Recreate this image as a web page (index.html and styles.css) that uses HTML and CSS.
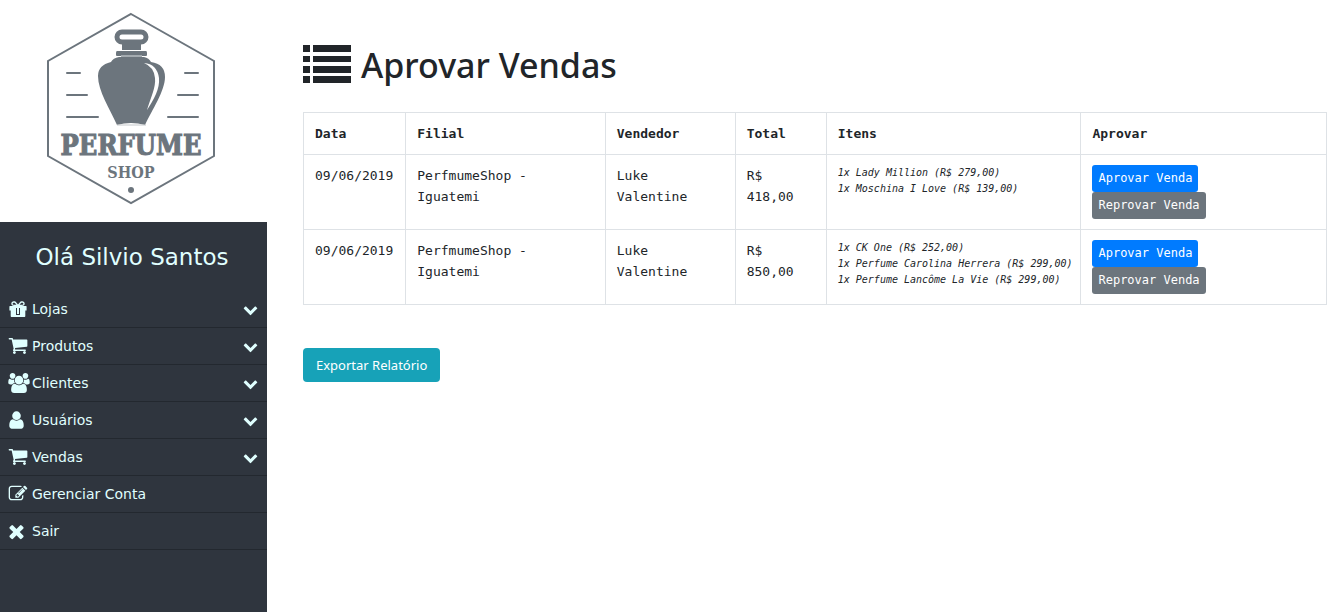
FILE: index.html
```html
<!DOCTYPE html>
<html lang="pt-BR">
<head>
<meta charset="utf-8">
<title>Aprovar Vendas</title>
<link rel="stylesheet" href="styles.css">
</head>
<body>
<svg class="sprite" aria-hidden="true">
  <symbol id="chevron" viewBox="0 0 1792 1792"><path d="M1683 808l-742 741q-19 19-45 19t-45-19l-742-741q-19-19-19-45.500t19-45.500l166-165q19-19 45-19t45 19l531 531 531-531q19-19 45-19t45 19l166 165q19 19 19 45.500t-19 45.500z"/></symbol>
  <symbol id="cart" viewBox="32 160 1728 1600"><path d="M704 1536q0 52-38 90t-90 38-90-38-38-90 38-90 90-38 90 38 38 90zm896 0q0 52-38 90t-90 38-90-38-38-90 38-90 90-38 90 38 38 90zm128-1088v512q0 24-16.500 42.500t-40.500 21.500l-1044 122q13 60 13 70 0 16-24 64h920q26 0 45 19t19 45-19 45-45 19h-1024q-26 0-45-19t-19-45q0-11 8-31.500t16-36 21.500-40 15.500-29.500l-177-823h-204q-26 0-45-19t-19-45 19-45 45-19h256q16 0 28.500 6.500t19.500 15.500 13 24.500 8 26 5.500 29.500 4.500 26h1201q26 0 45 19t19 45z"/></symbol>
  <symbol id="user" viewBox="216 96 1360 1600"><path d="M1536 1399q0 109-62.500 187t-150.500 78h-854q-88 0-150.500-78t-62.500-187q0-85 8.500-160.500t31.500-152 58.500-131 94-89 134.500-34.500q131 128 313 128t313-128q76 0 134.500 34.500t94 89 58.500 131 31.500 152 8.500 160.500zm-256-887q0 159-112.500 271.500t-271.500 112.500-271.500-112.500-112.500-271.500 112.500-271.500 271.500-112.500 271.500 112.500 112.500 271.500z"/></symbol>
  <symbol id="times" viewBox="180 150 1432 1432"><path d="M1490 1322q0 40-28 68l-136 136q-28 28-68 28t-68-28l-294-294-294 294q-28 28-68 28t-68-28l-136-136q-28-28-28-68t28-68l294-294-294-294q-28-28-28-68t28-68l136-136q28-28 68-28t68 28l294 294 294-294q28-28 68-28t68 28l136 136q28 28 28 68t-28 68l-294 294 294 294q28 28 28 68z"/></symbol>
  <symbol id="edit" viewBox="0 64 1792 1728"><path d="M888 1184l116-116-152-152-116 116v56h96v96h56zm440-720q-16-16-33 1l-350 350q-17 17-1 33t33-1l350-350q17-17 1-33zm80 594v190q0 119-84.500 203.500t-203.500 84.500h-832q-119 0-203.500-84.500t-84.500-203.500v-832q0-119 84.500-203.500t203.500-84.500h832q63 0 117 25 15 7 18 23 3 17-9 29l-49 49q-14 14-32 8-23-6-45-6h-832q-66 0-113 47t-47 113v832q0 66 47 113t113 47h832q66 0 113-47t47-113v-126q0-13 9-22l64-64q15-15 35-7t20 29zm-96-738l288 288-672 672h-288v-288zm444 132l-92 92-288-288 92-92q28-28 68-28t68 28l152 152q28 28 28 68t-28 68z"/></symbol>
  <symbol id="users" viewBox="0 0 1920 1792"><path d="M593 896q-162 5-265 128h-134q-82 0-138-40.500t-56-118.500q0-353 124-353 6 0 43.500 21t97.500 42.500 119 21.500q67 0 133-23-5 37-5 66 0 139 81 256zm1071 637q0 120-73 189.500t-194 69.500h-874q-121 0-194-69.500t-73-189.500q0-53 3.500-103.500t14-109 26.500-108.500 43-97.500 62-81 85.500-53.500 111.500-20q10 0 43 21.500t73 48 107 48 135 21.500 135-21.500 107-48 73-48 43-21.500q61 0 111.500 20t85.500 53.500 62 81 43 97.500 26.500 108.500 14 109 3.500 103.500zm-1024-1277q0 106-75 181t-181 75-181-75-75-181 75-181 181-75 181 75 75 181zm704 384q0 159-112.500 271.500t-271.500 112.500-271.500-112.500-112.500-271.500 112.500-271.500 271.500-112.500 271.500 112.500 112.500 271.500zm576 225q0 78-56 118.500t-138 40.500h-134q-103-123-265-128 81-117 81-256 0-29-5-66 66 23 133 23 59 0 119-21.500t97.500-42.500 43.500-21q124 0 124 353zm-128-609q0 106-75 181t-181 75-181-75-75-181 75-181 181-75 181 75 75 181z"/></symbol>
  <symbol id="gift" viewBox="0 0 18 18"><path fill-rule="evenodd" d="M1 6h4.500C3 6 2.300 4.900 2.300 3.700 2.300 2.300 3.300 1.300 4.800 1.300c1.200 0 2 .5 2.700 1.400L9 4.500l1.500-1.800c.7-.9 1.500-1.400 2.700-1.400 1.500 0 2.500 1 2.500 2.400 0 1.200-.7 2.300-3.200 2.300H17c.4 0 .6.200.6.600v3.800h-1.300V16c0 .7-.4 1-1 1H2.700c-.6 0-1-.3-1-1v-5.600H.4V6.600C.4 6.200.6 6 1 6zM4.800 2.700c-.7 0-1.100.4-1.100 1s.4 1 1.100 1h2.600L6.200 3.300c-.4-.5-.8-.6-1.400-.6zm8.400 0c-.6 0-1 .1-1.400.6l-1.200 1.400h2.600c.7 0 1.100-.4 1.100-1s-.4-1-1.100-1zM7 8v7h4V8z"/><path d="M8 6h2v8H8z"/></symbol>
</svg>
<div class="layout">
  <aside class="sidebar">
    <div class="brand">
      <svg class="logo" viewBox="0 0 170 194" role="img" aria-label="Perfume Shop">
        <path class="logo-line" d="M85 2L168 49V144L85 191L2 144V49Z"/>
        <rect class="logo-handle" x="71" y="20" width="29" height="10" rx="5"/>
        <path class="logo-fill" d="M76 32h19v6H76zM71 39h29q1 0 1 2v2q0 1-1 1H71q-1 0-1-1v-2q0-2 1-2z"/>
        <path class="logo-soft" d="M75 43h21v3H75z"/>
        <path class="logo-fill" d="M73 45h25q5 1 7 5 14 2 14 15c0 14-13 33-20 48q-14-4-28 0C64 97 52 79 52 64q0-11 13-14 2-4 8-5z"/>
        <path class="logo-gap" d="M98 51q13 1 15 15c1 11-5 21-12 32 4-13 9-23 8-32q-1-11-11-15z"/>
        <path class="logo-edge" d="M71 113h29"/>
        <path class="logo-dash" d="M21 61h13M21 83h20M21 105h31M139 61h13M132 83h20M122 105h30"/>
        <text class="logo-name" x="85" y="143">PERFUME</text>
        <text class="logo-sub" x="85" y="166">SHOP</text>
        <circle class="logo-fill" cx="85" cy="178" r="3"/>
      </svg>
    </div>
    <p class="greeting">Olá Silvio Santos</p>
    <nav class="menu">
      <button class="item" type="button"><svg class="icon"><use href="#gift"/></svg><span>Lojas</span><svg class="arrow"><use href="#chevron"/></svg></button>
      <button class="item" type="button"><svg class="icon"><use href="#cart"/></svg><span>Produtos</span><svg class="arrow"><use href="#chevron"/></svg></button>
      <button class="item" type="button"><svg class="icon wide"><use href="#users"/></svg><span>Clientes</span><svg class="arrow"><use href="#chevron"/></svg></button>
      <button class="item" type="button"><svg class="icon narrow"><use href="#user"/></svg><span>Usuários</span><svg class="arrow"><use href="#chevron"/></svg></button>
      <button class="item" type="button"><svg class="icon"><use href="#cart"/></svg><span>Vendas</span><svg class="arrow"><use href="#chevron"/></svg></button>
      <a class="item" href="#conta"><svg class="icon"><use href="#edit"/></svg><span>Gerenciar Conta</span></a>
      <a class="item" href="#sair"><svg class="icon narrow"><use href="#times"/></svg><span>Sair</span></a>
    </nav>
  </aside>
  <main class="content">
    <h1 class="title">
      <svg class="title-icon" viewBox="0 0 48 38" aria-hidden="true"><path d="M0 0h7v7H0zM10 0h38v7H10zM0 11h7v6H0zM10 11h38v6H10zM0 21h7v7H0zM10 21h38v7H10zM0 31h7v7H0zM10 31h38v7H10z"/></svg>
      <span>Aprovar Vendas</span>
    </h1>
    <table class="sales">
      <thead>
        <tr><th class="c-date">Data</th><th class="c-branch">Filial</th><th class="c-seller">Vendedor</th><th class="c-total">Total</th><th class="c-items">Itens</th><th class="c-approve">Aprovar</th></tr>
      </thead>
      <tbody>
        <tr>
          <td>09/06/2019</td><td>PerfmumeShop - Iguatemi</td><td>Luke Valentine</td><td>R$ 418,00</td>
          <td class="items">1x Lady Million (R$ 279,00)<br>1x Moschina I Love (R$ 139,00)</td>
          <td><div class="actions"><button class="btn approve" type="button">Aprovar Venda</button><button class="btn reject" type="button">Reprovar Venda</button></div></td>
        </tr>
        <tr>
          <td>09/06/2019</td><td>PerfmumeShop - Iguatemi</td><td>Luke Valentine</td><td>R$ 850,00</td>
          <td class="items">1x CK One (R$ 252,00)<br>1x Perfume Carolina Herrera (R$ 299,00)<br>1x Perfume Lancôme La Vie (R$ 299,00)</td>
          <td><div class="actions"><button class="btn approve" type="button">Aprovar Venda</button><button class="btn reject" type="button">Reprovar Venda</button></div></td>
        </tr>
      </tbody>
    </table>
    <button class="export" type="button">Exportar Relatório</button>
  </main>
</div>
</body>
</html>
```
FILE: styles.css
```css
* { box-sizing: border-box; }
body { margin: 0; background: #fff; color: #212529; font-family: "Noto Sans", "Open Sans", sans-serif; }
.sprite { display: none; }
.layout { display: flex; min-height: 100vh; }

.sidebar { flex: 0 0 267px; background: #2f353e; color: #e0ffff; font-family: "DejaVu Sans", sans-serif; }
.brand { background: #fff; padding: 12px 0 16px 46px; }
.logo { display: block; width: 170px; height: 194px; fill: #6c757d; }
.logo-line { fill: none; stroke: #6c757d; stroke-width: 2; }
.logo-handle { fill: none; stroke: #6c757d; stroke-width: 5; }
.logo-soft { fill: #a4abb0; }
.logo-gap { fill: #fff; }
.logo-edge { stroke: #c4c8cb; stroke-width: 1; }
.logo-dash { fill: none; stroke: #6c757d; stroke-width: 2; stroke-linecap: round; }
.logo-name, .logo-sub { font-family: "DejaVu Serif Condensed", "DejaVu Serif", serif; font-weight: 700; text-anchor: middle; stroke: #6c757d; }
.logo-name { font-size: 27px; stroke-width: 1; }
.logo-sub { font-size: 16px; stroke-width: 0; }
.greeting { margin: 0; padding: 19px 3px 18px 0; text-align: center; font-size: 23px; line-height: 32px; }
.menu { display: flex; flex-direction: column; }
.item { display: flex; align-items: center; height: 37px; padding: 0 8px; border: 0; border-bottom: 1px solid #23282f; background: none; color: inherit; font: inherit; font-size: 14px; text-align: left; text-decoration: none; }
.icon { width: 20px; height: 18px; margin-right: 4px; fill: currentColor; flex: none; }
.icon.wide { width: 22px; height: 20px; margin-right: 2px; }
.icon.narrow { width: 17px; margin-right: 7px; }
.arrow { width: 15px; height: 15px; margin-left: auto; margin-right: 1px; fill: currentColor; }

.content { flex: 1; min-width: 0; padding: 39px 14px 39px 36px; }
.title { display: flex; align-items: center; gap: 10px; margin: 0 0 21px; font-size: 34px; font-weight: 500; line-height: 52px; }
.title-icon { width: 48px; height: 38px; margin-bottom: 2px; fill: #212529; }
.sales { width: 100%; table-layout: fixed; border-collapse: collapse; font-family: "DejaVu Sans Mono", monospace; font-size: 13px; line-height: 21px; }
.sales th, .sales td { border: 1px solid #dee2e6; padding: 10px 11px; text-align: left; vertical-align: top; }
.c-date { width: 10%; }
.c-branch { width: 19.5%; }
.c-seller { width: 12.7%; }
.c-total { width: 8.9%; }
.c-items { width: 24.9%; }
.sales .items { padding-right: 4px; font-size: 10px; font-style: italic; line-height: 16px; white-space: nowrap; }
.actions { display: flex; flex-direction: column; align-items: flex-start; }
.btn { height: 27px; padding: 0 6px 2px; border: 0; border-radius: 3px; color: #fff; font-family: inherit; font-size: 12px; }
.approve { background: #007bff; }
.reject { background: #6c757d; }
.export { height: 34px; margin-top: 43px; padding: 0 13px; border: 0; border-radius: 4px; background: #17a2b8; color: #fff; font-family: inherit; font-size: 13px; }
```
